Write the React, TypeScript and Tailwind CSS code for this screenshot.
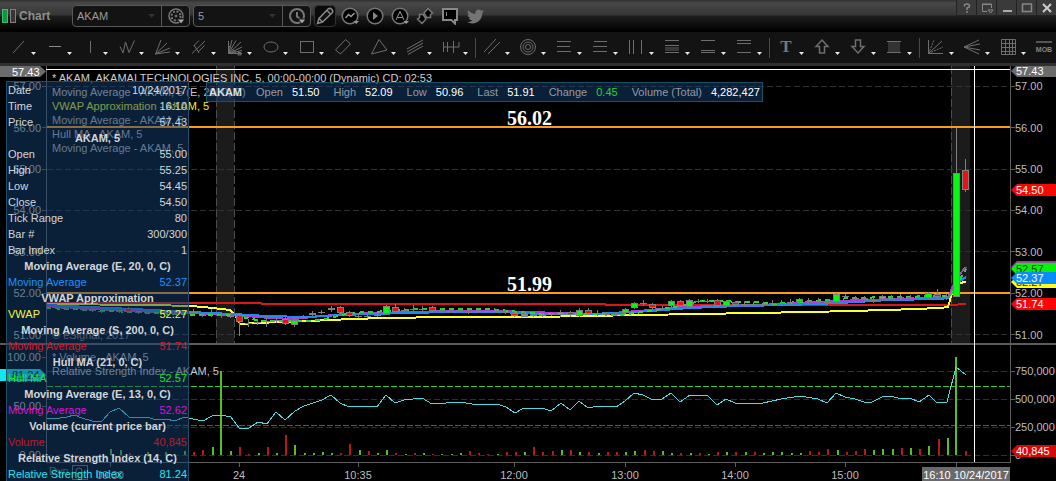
import React from 'react';
import { clsx } from 'clsx';
import { FaTwitter } from 'react-icons/fa';

const GRID_PRICES = [57, 56, 55, 54, 53, 52, 51];
const priceY = (price: number) => Math.round((293 + (52 - price) * 41.4) * 2) / 2;

const VOLUME_TICKS = [
  { y: 371, label: '750,000' },
  { y: 399, label: '500,000' },
  { y: 427, label: '250,000' },
  { y: 455, label: '0' },
];

const TIME_TICKS = [
  { x: 110, label: '09:30' },
  { x: 239, label: '24' },
  { x: 358, label: '10:35' },
  { x: 514, label: '12:00' },
  { x: 625, label: '13:00' },
  { x: 735, label: '14:00' },
  { x: 845, label: '15:00' },
];

const LEGEND = [
  { y: 82, text: '* AKAM, AKAMAI TECHNOLOGIES INC, 5, 00:00-00:00 (Dynamic) CD: 02:53', fill: '#cfcfcf' },
  { y: 96, text: 'Moving Average - AKAM, 5 (E, 20, 0, C)', fill: '#c4c4c4' },
  { y: 110, text: 'VWAP Approximation - AKAM, 5', fill: '#eeee22' },
  { y: 124, text: 'Moving Average - AKAM, 5', fill: '#b4b4b4' },
  { y: 138, text: 'Hull MA - AKAM, 5', fill: '#b4b4b4' },
  { y: 152, text: 'Moving Average - AKAM, 5', fill: '#b4b4b4' },
  { y: 339, text: '© eSignal, 2017', fill: '#808080' },
  { y: 361, text: '* Volume - AKAM, 5', fill: '#b4b4b4' },
  { y: 375, text: 'Relative Strength Index - AKAM, 5', fill: '#c4c4c4' },
];

const RED_MA = '46,303 261,303 262,304 605,304 606,305 951,305 966,304';
const VWAP =
  '46,304 150,305 192,306 202,307 213,308 230,310 235,315 240,324 256,323 283,322 333,320 350,319 387,318 446,317 530,317 590,316 638,315 700,314 753,313 810,312 850,311 887,310 915,309 940,308 948,307 952,293 959,283 966,282';
const BLUE_MA =
  '46,305 133,309 190,312 233,314 267,316 307,317 340,315 407,313 453,312 500,312 540,314 590,314 637,312 690,308 740,306 790,305 840,303 890,300 940,299 948,298 960,281 966,277';
const MAGENTA_MA =
  '46,306 110,310 190,313 233,315 270,318 295,319 312,317 345,314 450,311 500,311 560,313 600,314 650,310 680,307 760,305 820,302 860,300 940,298 948,297 958,276 966,267';
const HULL =
  '46,308 110,311 200,315 232,315 262,321 310,321 330,318 350,313 390,311 420,309 490,309 510,311 540,314 590,314 620,315 650,311 680,306 700,301 760,302 770,304 800,302 850,298 940,296 950,296 966,269';
const RSI =
  '47,418 60,418 67,417 74,415 82,418 92,421 102,421 110,412 119,408 129,417 147,417 156,420 166,419 175,421 184,417 193,419 203,421 212,416 221,415 231,417 239,428 249,428 258,422 267,424 276,412 285,420 295,411 304,406 313,403 322,400 331,395 340,403 349,407 358,406 377,407 386,395 395,403 404,400 422,398 432,404 460,402 478,405 497,404 506,407 515,413 524,408 533,409 542,408 551,411 561,403 570,410 579,401 588,408 598,406 616,407 625,401 634,393 643,395 653,400 662,399 671,393 680,402 690,395 708,396 717,405 726,399 735,403 763,403 781,399 800,396 818,399 827,403 836,393 845,397 855,399 864,402 872,402 882,397 891,396 901,399 910,398 919,402 929,395 937,403 947,402 956,367 966,375';

type Tone = 'g' | 'r';

// x, body top, body bottom, wick top, wick bottom, colour
const CANDLES: [number, number, number, number, number, Tone][] = [
  [92, 309, 311, 308, 312, 'r'],
  [128, 308, 312, 307, 313, 'r'],
  [239, 315, 322, 313, 336, 'r'],
  [285, 319, 324, 317, 325, 'r'],
  [294, 320, 325, 317, 327, 'g'],
  [312, 313, 315, 311, 316, 'g'],
  [331, 308, 310, 306, 312, 'g'],
  [340, 307, 313, 306, 315, 'r'],
  [349, 312, 316, 311, 317, 'r'],
  [386, 306, 314, 305, 315, 'g'],
  [395, 307, 312, 304, 313, 'r'],
  [432, 307, 311, 306, 312, 'r'],
  [514, 313, 316, 311, 317, 'r'],
  [524, 314, 317, 312, 317, 'g'],
  [560, 312, 315, 310, 317, 'g'],
  [570, 312, 315, 311, 317, 'r'],
  [579, 310, 316, 308, 317, 'g'],
  [588, 310, 314, 308, 315, 'r'],
  [625, 309, 313, 308, 314, 'g'],
  [634, 303, 308, 302, 309, 'g'],
  [652, 304, 308, 303, 310, 'r'],
  [671, 301, 306, 300, 307, 'g'],
  [680, 301, 306, 300, 307, 'r'],
  [689, 300, 307, 299, 308, 'g'],
  [717, 300, 306, 299, 307, 'r'],
  [726, 301, 306, 300, 308, 'g'],
  [735, 302, 305, 301, 306, 'r'],
  [799, 299, 302, 298, 304, 'g'],
  [836, 294, 302, 293, 303, 'g'],
  [864, 298, 300, 296, 302, 'r'],
  [882, 296, 299, 295, 301, 'g'],
  [928, 293, 298, 292, 299, 'g'],
  [937, 294, 297, 289, 299, 'r'],
  [956, 173, 297, 128, 297, 'g'],
  [965, 170, 190, 159, 192, 'r'],
];

// bars whose open and close nearly coincide: x, y, reach of the wick
const DOJIS: [number, number, number][] = [
  [55, 307, 2], [64, 308, 2], [83, 309, 2], [101, 311, 2], [119, 311, 2], [138, 312, 2], [147, 312, 2], [165, 312, 2],
  [174, 313, 2], [193, 312, 3], [202, 315, 2], [211, 313, 4], [221, 315, 3], [230, 316, 2],
  [248, 323, 4], [257, 322, 3], [266, 321, 6], [276, 320, 3], [303, 317, 2], [321, 312, 2], [358, 316, 2],
  [367, 316, 2], [377, 315, 2], [404, 310, 2], [413, 309, 4], [422, 309, 3], [441, 310, 2], [450, 311, 2],
  [459, 310, 2], [468, 312, 2], [478, 311, 2], [487, 311, 2], [496, 311, 2], [505, 312, 2], [533, 315, 2],
  [542, 315, 2], [551, 314, 2], [597, 313, 3], [606, 314, 2], [616, 314, 2], [643, 303, 3], [662, 308, 2],
  [698, 301, 2], [707, 301, 2], [744, 304, 3], [753, 304, 2], [763, 304, 2], [772, 303, 3], [781, 303, 3],
  [790, 302, 3], [808, 301, 3], [818, 301, 3], [827, 302, 3], [845, 296, 2], [855, 298, 2], [873, 300, 3],
  [891, 298, 3], [900, 297, 3], [910, 297, 2], [919, 297, 2], [946, 297, 3],
];

// x, height, colour
const VOLUMES: [number, number, Tone][] = [
  [110, 6, 'g'], [120, 5, 'g'], [129, 2, 'r'], [147, 3, 'g'], [165, 3, 'g'], [184, 4, 'g'], [193, 3, 'r'],
  [202, 5, 'r'], [212, 8, 'g'], [220, 84, 'g'], [230, 4, 'g'], [239, 8, 'r'], [248, 1, 'r'], [258, 2, 'g'],
  [267, 8, 'r'], [276, 2, 'g'], [285, 20, 'r'], [294, 10, 'g'], [304, 2, 'g'], [313, 2, 'g'], [322, 3, 'g'],
  [331, 2, 'g'], [340, 2, 'r'], [349, 11, 'r'], [359, 5, 'g'], [368, 4, 'r'], [377, 2, 'g'], [386, 5, 'g'],
  [395, 2, 'r'], [405, 1, 'g'], [414, 2, 'r'], [423, 2, 'g'], [432, 1, 'r'], [441, 1, 'g'], [451, 1, 'g'],
  [460, 2, 'g'], [469, 4, 'r'], [478, 2, 'r'], [487, 1, 'r'], [497, 1, 'g'], [506, 3, 'r'], [515, 3, 'r'],
  [524, 3, 'g'], [533, 8, 'r'], [542, 3, 'r'], [552, 4, 'r'], [561, 5, 'g'], [570, 5, 'r'], [579, 3, 'g'],
  [588, 3, 'r'], [598, 2, 'g'], [607, 3, 'r'], [616, 3, 'r'], [625, 3, 'g'], [634, 4, 'g'], [644, 5, 'r'],
  [653, 4, 'r'], [662, 4, 'g'], [671, 2, 'g'], [680, 2, 'r'], [690, 2, 'g'], [699, 2, 'r'], [708, 1, 'g'],
  [717, 3, 'r'], [726, 3, 'g'], [735, 3, 'r'], [745, 3, 'g'], [754, 3, 'r'], [763, 2, 'g'], [772, 3, 'g'],
  [781, 3, 'g'], [791, 2, 'g'], [800, 2, 'g'], [809, 4, 'r'], [818, 3, 'r'], [827, 6, 'r'], [837, 5, 'g'],
  [846, 3, 'r'], [855, 4, 'r'], [864, 6, 'r'], [873, 5, 'g'], [882, 6, 'g'], [892, 6, 'g'], [901, 7, 'r'],
  [910, 7, 'g'], [919, 6, 'r'], [928, 9, 'g'], [938, 16, 'r'], [947, 17, 'g'], [955, 98, 'g'], [965, 4, 'r'],
];

interface DataRow {
  label?: string;
  value?: string;
  title?: string;
  color?: string;
}

const DATA_ROWS: DataRow[] = [
  { label: 'Date', value: '10/24/2017' },
  { label: 'Time', value: '16:10' },
  { label: 'Price', value: '57.43' },
  { title: 'AKAM, 5' },
  { label: 'Open', value: '55.00' },
  { label: 'High', value: '55.25' },
  { label: 'Low', value: '54.45' },
  { label: 'Close', value: '54.50' },
  { label: 'Tick Range', value: '80' },
  { label: 'Bar #', value: '300/300' },
  { label: 'Bar Index', value: '1' },
  { title: 'Moving Average (E, 20, 0, C)' },
  { label: 'Moving Average', value: '52.37', color: 'text-[#1e90ff]' },
  { title: 'VWAP Approximation' },
  { label: 'VWAP', value: '52.27', color: 'text-[#f4f43a]' },
  { title: 'Moving Average (S, 200, 0, C)' },
  { label: 'Moving Average', value: '51.74', color: 'text-[#dd1524]' },
  { title: 'Hull MA (21, 0, C)' },
  { label: 'Hull MA', value: '52.57', color: 'text-[#16e62a]' },
  { title: 'Moving Average (E, 13, 0, C)' },
  { label: 'Moving Average', value: '52.62', color: 'text-[#d512dc]' },
  { title: 'Volume (current price bar)' },
  { label: 'Volume', value: '40,845', color: 'text-[#bd1a28]' },
  { title: 'Relative Strength Index (14, C)' },
  { label: 'Relative Strength Index', value: '81.24', color: 'text-[#22e6ee]' },
];

const QUOTES = [
  { label: 'Open', value: '51.50' },
  { label: 'High', value: '52.09' },
  { label: 'Low', value: '50.96' },
  { label: 'Last', value: '51.91' },
  { label: 'Change', value: '0.45', color: 'text-[#1fd534]' },
  { label: 'Volume (Total)', value: '4,282,427' },
];

interface Tool {
  name: string;
  icon: React.ReactNode;
  noMenu?: boolean;
}

const TOOL_GROUPS: Tool[][] = [
  [
    { name: 'Trend line', icon: <path d="M11 21L22 9" /> },
    { name: 'Horizontal line', icon: <path d="M11 14.5H23" stroke="#8a8a8a" /> },
    { name: 'Vertical line', icon: <path d="M16.5 9V21" /> },
    { name: 'Zigzag', icon: <path d="M10 14.500L13 21L15.500 10L19 20.500L24.500 8.500" /> },
    { name: 'Gann fan', icon: <path d="M9.500 22L15 8M9.500 22L21 11M9.500 22L24 16M9.500 22L24 20" /> },
    { name: 'Pitchfork', icon: <path d="M10 21.500L23 9M12 13L17 21M11.500 14L17 8.500M16 20L22.500 13.500" /> },
    {
      name: 'Speed resistance',
      icon: <path d="M10.500 9V21.500H24M10.500 21.500L14 8M10.500 21.500L18 8.500M10.500 21.500L23 10M10.500 21.500L24 15M10.500 21.500L24 18.500M10 13L19 22M20 20.500H23V23H20Z" />,
    },
    { name: 'Ellipse', icon: <ellipse cx="17" cy="15" rx="7" ry="5" /> },
    { name: 'Rectangle', icon: <rect x="10.500" y="9.500" width="13" height="11" /> },
    { name: 'Rotated rectangle', icon: <path d="M9.500 18L19.500 7.500L24.500 12L14.500 22Z" /> },
    { name: 'Triangle', icon: <path d="M9.500 22L17 7.500L25 18Z" /> },
    { name: 'Regression channel', icon: <path d="M9 17L25 8M9 20L25 11M10 22.500L25 14" /> },
    { name: 'Time cycles', icon: <path d="M9.500 10V20M13.500 10V20M19.500 9V21M9.500 15H25V10" /> },
  ],
  [
    { name: 'Parallel lines', icon: <path d="M8 20L20 7M12 22L24 10" /> },
    {
      name: 'Circles',
      icon: (
        <>
          <circle cx="16" cy="15" r="7.500" />
          <circle cx="16" cy="15" r="5" />
          <circle cx="16" cy="15" r="2.500" />
        </>
      ),
    },
    { name: 'Retracement', icon: <path d="M9 9.500H23M9 14.500H22M9 19.500H23" /> },
    { name: 'Extension', icon: <path d="M10 9.500H23M9 14.500H23M9 19.500H23" /> },
    { name: 'Time zones', icon: <path d="M9.500 8V22M13.500 8V22M21.500 8V22" /> },
    {
      name: 'Price band',
      icon: (
        <>
          <rect x="9" y="15" width="14" height="4" fill="#3a3a3a" stroke="none" />
          <path d="M9 8.500H23M9 13.500H23M9 20.500H23" />
        </>
      ),
    },
    { name: 'Two band', icon: <path d="M9 8.500H23M9 18.500H23M9 20.500H23" /> },
    { name: 'Gap band', icon: <path d="M9 8.500H23M9 11.500H23M9 20.500H23" /> },
  ],
  [
    {
      name: 'Text',
      icon: (
        <text x="16" y="20" textAnchor="middle" fontFamily="Liberation Serif, serif" fontSize="17" fontWeight="700" fill="#777" stroke="none">
          T
        </text>
      ),
    },
    { name: 'Arrow up', icon: <path d="M16 8L22 14.500H18.500V21H13.500V14.500H10Z" strokeWidth="1.500" /> },
    { name: 'Arrow down', icon: <path d="M16 21L22 14.500H18.500V8H13.500V14.500H10Z" strokeWidth="1.500" /> },
    {
      name: 'Highlight',
      icon: (
        <>
          <rect x="10" y="10" width="12" height="10" fill="#333" stroke="none" />
          <path d="M9 9.500H23M9 20.500H23" />
        </>
      ),
    },
  ],
  [
    {
      name: 'Axis rays',
      icon: (
        <>
          <path d="M8.500 8V21.500H23M8.500 21.500L22 9" />
          <path d="M8.500 21.500L14 8M8.500 21.500L23 15" strokeDasharray="2 1" />
        </>
      ),
    },
    { name: 'Fan lines', icon: <path d="M8 15L23 8M8 15L24 12M8 15L24 18M8 15L23 22" /> },
    { name: 'Grid', icon: <path d="M9.500 7.500H23.500V22.500H9.500ZM13.500 7.500V22.500M17.500 7.500V22.500M20.500 7.500V22.500M9.500 11.500H23.500M9.500 15.500H23.500M9.500 19.500H23.500" /> },
    {
      name: 'MOB',
      noMenu: true,
      icon: (
        <>
          <path d="M8 10H24" strokeWidth="2" stroke="#555" />
          <text x="16" y="20" textAnchor="middle" fontFamily="Liberation Sans, sans-serif" fontSize="7" fontWeight="700" fill="#858585" stroke="none">
            MOB
          </text>
        </>
      ),
    },
  ],
];

function ToolButton({ name, icon, noMenu }: Tool) {
  return (
    <button type="button" aria-label={name} className="h-[31px] w-9 shrink-0">
      <svg viewBox="0 0 36 31" className="block h-full w-full" fill="none" stroke="#6e6e6e" strokeWidth="1">
        {icon}
        {!noMenu && <path d="M29 20H34L31.500 23Z" fill="#e8e8e8" stroke="none" />}
      </svg>
    </button>
  );
}

interface PickerProps {
  label: string;
  value: string;
  children: React.ReactNode;
}

// drop-down with an icon button joined to its right side
function Picker({ label, value, children }: PickerProps) {
  return (
    <div className="flex h-[22px] w-[118px] rounded-sm border border-[#585858] bg-[#131313]">
      <div className="relative flex-1">
        <select aria-label={label} defaultValue={value} className="block h-5 w-full appearance-none bg-transparent pl-1 text-[11px] leading-5 text-[#9a9a9a] outline-none">
          <option>{value}</option>
        </select>
        <svg viewBox="0 0 7 4" className="pointer-events-none absolute top-2 right-1.5 h-1 w-[7px]" fill="#303030">
          <path d="M0 0H7L3.500 4Z" />
        </svg>
      </div>
      <button type="button" aria-label={`${label} settings`} className="flex w-7 items-center justify-center border-l border-[#585858]">
        {children}
      </button>
    </div>
  );
}

function TitleBar() {
  return (
    <header className="flex h-8 bg-[linear-gradient(to_bottom,#303030_0px,#484848_3px,#363636_15px,#1e1e1e_16px,#000_31px)]">
      <div className="flex flex-1 items-center gap-[3px]">
        <div className="flex w-[69px] items-center pl-0.5">
          <svg viewBox="0 0 14 14" className="h-[14px] w-[14px]">
            <rect x="0.500" y="0.500" width="5" height="13" fill="#129447" stroke="#2fc46c" />
            <rect x="8.500" y="0.500" width="5" height="13" fill="#3c3434" stroke="#858080" />
          </svg>
          <h1 className="pl-[3px] text-xs font-bold text-[#8e8e8e]">Chart</h1>
        </div>

        <Picker label="Symbol" value="AKAM">
          <svg viewBox="0 0 16 16" className="h-4 w-4" fill="none" stroke="#777">
            <circle cx="8" cy="8" r="7" strokeWidth="1.500" />
            <circle cx="8" cy="8" r="4.500" strokeWidth="2" strokeDasharray="2 1.530" />
            <circle cx="8" cy="8" r="1" fill="#777" />
            <path d="M9 11H17L13 16Z" fill="#aaa" stroke="#131313" />
          </svg>
        </Picker>
        <Picker label="Interval" value="5">
          <svg viewBox="0 0 16 16" className="h-4 w-4" fill="none" stroke="#777">
            <circle cx="8" cy="8" r="7" strokeWidth="2" />
            <path d="M8 4V8.500L11 11" strokeWidth="2" />
            <path d="M9 11H17L13 16Z" fill="#aaa" stroke="#131313" />
          </svg>
        </Picker>

        <div className="flex items-center gap-[3px]">
          <button type="button" aria-label="Draw" className="flex h-[22px] w-[22px] items-center justify-center rounded-sm border border-[#333] bg-[#0a0a0a]">
            <svg viewBox="0 0 18 18" className="h-[18px] w-[18px]" fill="#111" stroke="#888" strokeWidth="1.500">
              <path d="M1.500 16.500L3 11.500L12 2Q14 0.500 16 2.500Q17.500 4.500 16 6L6.500 15Z" />
              <path d="M11 3.500L14.500 7M3 11.500L6.500 15" />
            </svg>
          </button>
          <button type="button" aria-label="Studies" className="flex h-[22px] w-[22px] items-center justify-center">
            <svg viewBox="0 0 18 18" className="h-[18px] w-[18px]" fill="#000" stroke="#777" strokeWidth="1.500">
              <circle cx="9" cy="9" r="7.800" />
              <path d="M4.500 11L7.500 7.500L10 9.500L13.500 6" fill="none" stroke="#999" />
              <path d="M12.500 14H18L15.200 17Z" fill="#999" stroke="none" />
            </svg>
          </button>
          <button type="button" aria-label="Play" className="flex h-[22px] w-[22px] items-center justify-center">
            <svg viewBox="0 0 18 18" className="h-[18px] w-[18px]" fill="#000" stroke="#777" strokeWidth="1.500">
              <circle cx="9" cy="9" r="7.800" />
              <path d="M7 5L12 9L7 13Z" fill="#888" stroke="none" />
            </svg>
          </button>
          <button type="button" aria-label="Alerts" className="flex h-[22px] w-[22px] items-center justify-center">
            <svg viewBox="0 0 18 18" className="h-[18px] w-[18px]" fill="#000" stroke="#777" strokeWidth="1.500">
              <circle cx="9" cy="9" r="7.800" />
              <path d="M5 13L9 4.500L13 13M6.500 10.500H11.500" fill="none" stroke="#999" strokeWidth="1" />
              <path d="M12.500 14H18L15.200 17Z" fill="#999" stroke="none" />
            </svg>
          </button>
          <button type="button" aria-label="Trade" className="flex h-[22px] w-[22px] items-center justify-center">
            <svg viewBox="0 0 18 18" className="h-[18px] w-[18px]" fill="#000" stroke="#777" strokeWidth="1.500">
              <path d="M12 1.500L16.500 6L14.500 7.500V10.500H11L9.500 8.500L8 6Z" />
              <path d="M6 16.500L1.500 12L3.500 10.500V7.500H7L8.500 9.500L10 12Z" />
            </svg>
          </button>
          <button type="button" aria-label="Messages" className="flex h-[22px] w-[22px] items-center justify-center">
            <svg viewBox="0 0 18 18" className="h-[18px] w-[18px]" fill="#000" stroke="#888" strokeWidth="2">
              <path d="M2 2H16V13H14V16.500L10.500 13H2Z" />
              <path d="M5.500 5V9" strokeWidth="1" />
            </svg>
          </button>
          <button type="button" aria-label="Twitter" className="flex h-[22px] w-[22px] items-center justify-center text-[#747474]">
            <FaTwitter size={17} />
          </button>
        </div>
      </div>

      <div className="flex h-4 items-stretch">
        {WINDOW_BUTTONS.map((button) => (
          <button key={button.name} type="button" aria-label={button.name} className="flex w-5 items-center justify-center border-b border-l border-[#222] bg-[#3a3a3a]">
            <svg viewBox="0 0 12 12" className="h-3 w-3" fill="none" stroke="#888" strokeWidth="1">
              {button.icon}
            </svg>
          </button>
        ))}
      </div>
    </header>
  );
}

const WINDOW_BUTTONS = [
  { name: 'Help', icon: <path d="M3.500 4.500V3Q3.500 2 6 2Q8.500 2 8.500 4Q8.500 5.500 6 6V8M6 9V11" strokeWidth="1.500" /> },
  { name: 'Pop out', icon: <path d="M1 2H10.500V6M1.500 2V9.500H6M1 2.500H10M7 8H12L9.500 11Z" /> },
  { name: 'Minimize', icon: <path d="M2 9H11" strokeWidth="2" stroke="#aaa" /> },
  { name: 'Maximize', icon: <path d="M1.500 2V9.500H10.500V2M1 2H11" strokeWidth="1.500" /> },
  { name: 'Close', icon: <path d="M2 2L10 10M10 2L2 10" strokeWidth="2" stroke="#ccc" /> },
];

function DrawingToolbar() {
  return (
    <nav aria-label="Drawing tools" className="flex items-center overflow-hidden border-b-[3px] border-[#303030] bg-[#131313] pl-0.5">
      {TOOL_GROUPS.map((group, index) => (
        <React.Fragment key={group[0].name}>
          {index > 0 && <span className="ml-[5px] h-5 w-px shrink-0 bg-[#4a4a4a]" />}
          {group.map((tool) => (
            <ToolButton key={tool.name} {...tool} />
          ))}
        </React.Fragment>
      ))}
    </nav>
  );
}

interface AxisTagProps {
  y: number;
  label: string;
  fill: string;
  text?: string;
}

function AxisTag({ y, label, fill, text = '#fff' }: AxisTagProps) {
  return (
    <g>
      <path d={`M1011 ${y}L1017 ${y - 6}H1056V${y + 6}H1017Z`} fill={fill} />
      <text x="1016" y={y + 4} fill={text}>{label}</text>
    </g>
  );
}

function ChartCanvas() {
  return (
    <svg viewBox="0 66 1056 415" className="block h-auto w-full" fontSize="11" fill="none">
      {/* extended hours */}
      <g shapeRendering="crispEdges">
        <rect x="216" y="66" width="18" height="278" fill="#1b1b1b" />
        <rect x="951" y="66" width="19" height="278" fill="#1b1b1b" />
        <path d="M216.500 66V344M234.500 66V344M951.500 66V344" stroke="#4c4c4c" strokeDasharray="8 3" />

        {GRID_PRICES.map((price) => (
          <path key={price} d={`M47 ${Math.floor(priceY(price)) + 0.5}H1010`} stroke="#303030" strokeDasharray="6 3" />
        ))}
        {VOLUME_TICKS.map((tick) => (
          <path key={tick.label} d={`M47 ${tick.y + 0.5}H1010`} stroke="#303030" strokeDasharray="6 3" />
        ))}
        <path d="M47 386.500H1010" stroke="#33c933" strokeDasharray="6 2" />
        <path d="M47 425.500H1010" stroke="#c82828" strokeDasharray="6 2" />
        <path d="M46 127H1010M46 293H1010" stroke="#fb9a1c" strokeWidth="2" />
      </g>

      {LEGEND.map((line) => (
        <text key={line.y} x="52" y={line.y} fill={line.fill}>{line.text}</text>
      ))}

      {/* studies */}
      <g strokeWidth="2" shapeRendering="crispEdges">
        <polyline points={RED_MA} stroke="#d81818" />
        <polyline points={VWAP} stroke="#ffff30" />
        <polyline points={MAGENTA_MA} stroke="#b838e0" />
        <polyline points={BLUE_MA} stroke="#2288ee" />
        <polyline points={HULL} stroke="#28d838" strokeDasharray="5 4" />
      </g>

      <g shapeRendering="crispEdges">
        {DOJIS.map(([x, y, reach]) => (
          <path key={x} d={`M${x - 3} ${y + 0.5}H${x + 4}M${x + 0.5} ${y - reach}V${y + reach}`} stroke="#7e7e7e" />
        ))}
        {CANDLES.map(([x, top, bottom, high, low, tone]) => (
          <g key={x} stroke="#808080">
            <path d={`M${x + 0.5} ${high}V${low}`} />
            <rect x={x - 2.5} y={top + 0.5} width="6" height={bottom - top - 1} fill={tone === 'g' ? '#0af614' : '#f01010'} />
          </g>
        ))}
        {VOLUMES.map(([x, height, tone]) => (
          <rect key={x} x={x} y={455 - height} width="2" height={height} fill={tone === 'g' ? '#58bd20' : '#b41a1a'} />
        ))}
      </g>
      <polyline points={RSI} stroke="#4fdbe0" shapeRendering="crispEdges" />

      {/* frame and crosshair */}
      <g shapeRendering="crispEdges" stroke="#5c5c5c">
        <path d="M46.500 66V462M1010.500 66V462M46 462.500H1011" />
        <path d="M0 344H1056" strokeWidth="2" />
        {GRID_PRICES.map((price) => {
          const y = Math.floor(priceY(price)) + 0.5;
          return <path key={price} d={`M42 ${y}H46M1011 ${y}H1015`} />;
        })}
        {VOLUME_TICKS.map((tick) => (
          <path key={tick.label} d={`M1011 ${tick.y + 0.5}H1015`} />
        ))}
        <path d="M42 357.500H46M42 406.500H46M42 455.500H46" />
        {TIME_TICKS.map((tick) => (
          <path key={tick.label} d={`M${tick.x + 0.5} 463V467`} />
        ))}
        <path d="M956.500 463V467" />
        <path d="M46 69.500H1010M974.500 66V462" stroke="#fff" />
      </g>

      <g fill="#bdbdbd">
        {GRID_PRICES.map((price) => (
          <React.Fragment key={price}>
            <text x="41" y={Math.round(priceY(price)) + 4} textAnchor="end">{price.toFixed(2)}</text>
            <text x="1015" y={Math.round(priceY(price)) + 4}>{price.toFixed(2)}</text>
          </React.Fragment>
        ))}
        {VOLUME_TICKS.map((tick) => (
          <text key={tick.label} x="1015" y={tick.y + 4}>{tick.label}</text>
        ))}
        <text x="41" y="361" textAnchor="end">100.00</text>
        <text x="41" y="410" textAnchor="end">50.00</text>
        <text x="41" y="459" textAnchor="end">0.00</text>
        {TIME_TICKS.map((tick) => (
          <text key={tick.label} x={tick.x} y="479" textAnchor="middle">{tick.label}</text>
        ))}
        <text x="49" y="475" fill="#707070">Dyn</text>
        <rect x="72.500" y="465.500" width="15" height="14" stroke="#707070" fill="none" />
        <circle cx="79" cy="471" r="3" stroke="#808080" fill="none" />
      </g>

      <g fontFamily="Liberation Serif, serif" fontSize="20" fontWeight="700" fill="#fff">
        <text x="507" y="125">56.02</text>
        <text x="507" y="291">51.99</text>
      </g>

      <path d="M0 66H40L46 71.500L40 77H0Z" fill="#6c6c6c" />
      <text x="12" y="76" fill="#fff">57.43</text>
      <path d="M0 369H40L46 375L40 381H0Z" fill="#10e8f0" />
      <text x="12" y="379" fill="#000">81.24</text>

      <AxisTag y={71} label="57.43" fill="#6c6c6c" />
      <AxisTag y={190} label="54.50" fill="#fb0606" />
      <AxisTag y={267} label="52.62" fill="#8f4e99" />
      <AxisTag y={269} label="52.57" fill="#08f208" text="#0c4010" />
      <AxisTag y={282} label="52.27" fill="#ffff20" text="#222" />
      <AxisTag y={278} label="52.37" fill="#0a8cff" />
      <AxisTag y={304} label="51.74" fill="#fb0606" />
      <AxisTag y={451} label="40,845" fill="#d80808" />

      <rect x="922" y="467" width="88" height="14" fill="#6a6a6a" />
      <text x="966" y="479" fill="#fff" textAnchor="middle">16:10 10/24/2017</text>
    </svg>
  );
}

function DataWindow() {
  return (
    <section aria-label="Data window" className="absolute top-[15px] left-1.5 w-[183px] border border-[#1f4f66] bg-[#144070]/50 px-px">
      <table className="w-full border-collapse text-[11px] leading-4 text-[#d2d6da]">
        <tbody>
          {DATA_ROWS.map((row, index) => (
            <tr key={index} className={clsx('h-4', row.color)}>
              {row.title ? (
                <th colSpan={2} scope="rowgroup" className="p-0 text-center font-bold">{row.title}</th>
              ) : (
                <>
                  <th scope="row" className="p-0 text-left font-normal whitespace-nowrap">{row.label}</th>
                  <td className="p-0 text-right">{row.value}</td>
                </>
              )}
            </tr>
          ))}
        </tbody>
      </table>
    </section>
  );
}

function QuoteStrip() {
  return (
    <section aria-label="Quote" className="absolute top-4 left-[206px] flex h-5 items-center gap-[14px] border border-[#1f4f66] bg-[#144070]/50 px-0.5 text-[11px] whitespace-nowrap">
      <strong className="text-[#dcdfe2]">AKAM</strong>
      {QUOTES.map((quote) => (
        <span key={quote.label} className="flex gap-[9px]">
          <span className="text-[#929ba5]">{quote.label}</span>
          <span className={quote.color ?? 'text-white'}>{quote.value}</span>
        </span>
      ))}
    </section>
  );
}

export default function App() {
  return (
    <div className="min-h-screen bg-black font-['Liberation_Sans',Arial,sans-serif]">
      <TitleBar />
      <DrawingToolbar />
      <main className="relative overflow-hidden">
        <ChartCanvas />
        <DataWindow />
        <QuoteStrip />
      </main>
    </div>
  );
}
